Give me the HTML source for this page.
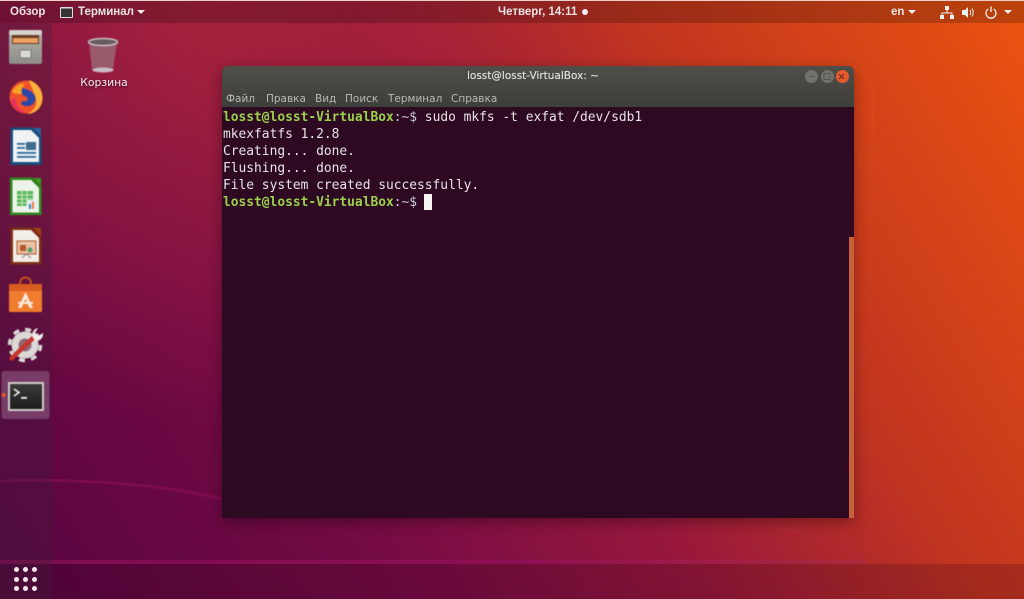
<!DOCTYPE html>
<html><head><meta charset="utf-8"><style>
html,body{margin:0;padding:0;width:1024px;height:599px;overflow:hidden;background:#800c3e}
*{box-sizing:border-box}
.abs{position:absolute}
#bg{position:absolute;left:0;top:0;width:1024px;height:599px}
.panel{position:absolute;left:0;top:0;width:1024px;height:23px;background:rgba(0,0,0,.2);border-top:1px solid #e9d0c8;font:11.5px "Liberation Sans","DejaVu Sans",sans-serif;color:#e8e4e2;font-weight:bold}
.panel span{position:absolute;top:5px;white-space:nowrap}
.dock{position:absolute;left:0;top:23px;width:52px;height:576px;background:rgba(60,30,60,.3)}
.bottom{position:absolute;left:0;top:564px;width:1024px;height:35px;background:rgba(40,0,20,.2)}
.win{position:absolute;left:222px;top:66px;width:632px;height:452px;box-shadow:0 4px 14px rgba(0,0,0,.35);border-radius:6px 6px 0 0;overflow:hidden;background:#2d0922}
.title{position:absolute;left:0;top:0;width:632px;height:41px;background:linear-gradient(#4f4e48,#3e3e3a);text-align:center;font:10.500px "DejaVu Sans","Liberation Sans",sans-serif;color:#dedcd6;padding-top:4px;padding-right:10px;text-shadow:0 0 .5px #dedcd6}
.menu{position:absolute;top:27px;font:10.500px "DejaVu Sans","Liberation Sans",sans-serif;color:#b9b7b0;white-space:nowrap}
pre{position:absolute;left:1px;top:43px;margin:0;font:12.9px/17px "DejaVu Sans Mono","Liberation Mono",monospace;color:#e8e4e4}
pre b{color:#9ad14a;font-weight:bold}
pre i{font-style:normal;color:#c8c8d8}
.cur{position:absolute;left:202px;top:128px;width:8px;height:16px;background:#f6f4f4}
.scroll{position:absolute;left:627px;top:171px;width:5px;height:281px;background:#c8603c}
.btn{position:absolute;top:4px;width:13px;height:13px;border-radius:50%;background:#6e6e68}
.lbl{position:absolute;left:72px;top:76px;width:64px;text-align:center;font:10.800px "DejaVu Sans","Liberation Sans",sans-serif;color:#f2eef0;text-shadow:0 1px 2px rgba(0,0,0,.6)}
.dot{position:absolute;width:5px;height:5px;border-radius:50%;background:#f4e6ee}
.soft{filter:blur(.4px)}
</style></head><body>
<svg id="bg" viewBox="0 0 1024 599">
<defs>
<linearGradient id="g" gradientUnits="userSpaceOnUse" x1="70" y1="640" x2="1040" y2="50">
<stop offset="0" stop-color="#5a0540"/>
<stop offset=".28" stop-color="#760b45"/>
<stop offset=".5" stop-color="#98183c"/>
<stop offset=".7" stop-color="#c03420"/>
<stop offset="1" stop-color="#ea5310"/>
</linearGradient>
<radialGradient id="t" gradientUnits="userSpaceOnUse" cx="200" cy="0" r="420">
<stop offset="0" stop-color="#b0283a" stop-opacity=".75"/>
<stop offset="1" stop-color="#b0283a" stop-opacity="0"/>
</radialGradient>
<linearGradient id="ln" gradientUnits="userSpaceOnUse" x1="0" y1="0" x2="866" y2="0">
<stop offset="0" stop-color="#7c0c50"/>
<stop offset=".6" stop-color="#8f0f55"/>
<stop offset="1" stop-color="#ac2a3c"/>
</linearGradient>
</defs>
<rect width="1024" height="599" fill="url(#g)"/>
<rect width="1024" height="599" fill="url(#t)"/>
<path d="M0 481C90 478 170 486 222 499" stroke="#8a0f55" stroke-opacity=".6" stroke-width="3" fill="none"/>
<path d="M780 527C815 535 845 548 866 561" stroke="#b02c3e" stroke-opacity=".55" stroke-width="3" fill="none"/>
<path d="M0 562H866" stroke="url(#ln)" stroke-width="4" fill="none"/>
<path d="M854 66Q872 78 873 95V140" stroke="#f07030" stroke-opacity=".1" stroke-width="3" fill="none"/>
</svg>
<div class="bottom"></div>
<div class="dock"></div>
<div class="panel">
<span style="left:10px">Обзор</span>
<svg class="abs" style="left:60px;top:6px" width="13" height="11"><rect width="13" height="11" rx="1" fill="#ddd"/><rect x="1" y="1.500" width="11" height="8.500" fill="#333"/></svg>
<span style="left:78px">Терминал</span>
<svg class="abs" style="left:137px;top:9px" width="8" height="5"><path d="M0 0H8L4 4Z" fill="#eee"/></svg>
<span style="left:498px">Четверг, 14:11</span>
<div class="abs" style="left:582px;top:8px;width:6px;height:6px;border-radius:50%;background:#eee"></div>
<span style="left:891px">en</span>
<svg class="abs" style="left:908px;top:9px" width="8" height="5"><path d="M0 0H8L4 4Z" fill="#eee"/></svg>
<svg class="abs" style="left:940px;top:5px" width="14" height="13"><path d="M5 0H9V4H5ZM0 9H4V13H0ZM10 9H14V13H10ZM6.500 4H7.500V6.500H12.500V9H11.500V7.500H2.500V9H1.500V6.500H6.500Z" fill="#eee"/></svg>
<svg class="abs" style="left:962px;top:5px" width="13" height="13"><path d="M0 4H3L6 1V12L3 9H0Z" fill="#eee"/><path d="M8 4Q9.500 6.500 8 9M10 2.500Q12.500 6.500 10 10.500" stroke="#eee" fill="none"/></svg>
<svg class="abs" style="left:985px;top:5px" width="12" height="13"><path d="M3.300 3A5 5 0 1 0 8.700 3M6 0.500V6" stroke="#eee" stroke-width="1.300" fill="none"/></svg>
<svg class="abs" style="left:1004px;top:9px" width="8" height="5"><path d="M0 0H8L4 4Z" fill="#eee"/></svg>
</div>

<!-- dock icons -->
<svg class="abs soft" style="left:0;top:23px" width="52" height="400" viewBox="0 23 52 400">
<defs><linearGradient id="gr" x1="0" y1="0" x2="0" y2="1"><stop offset="0" stop-color="#b5b3ae"/><stop offset="1" stop-color="#8f8d88"/></linearGradient>
<linearGradient id="tm" x1="0" y1="0" x2="0" y2="1"><stop offset="0" stop-color="#3a3b38"/><stop offset="1" stop-color="#1c1d1b"/></linearGradient></defs>
<!-- files -->
<rect x="9" y="30" width="33" height="34" rx="2" fill="url(#gr)"/>
<rect x="9" y="30" width="33" height="5" rx="2" fill="#d5d3cf"/>
<rect x="12" y="35" width="27" height="9" fill="#6b3a22"/>
<rect x="13" y="38" width="25" height="5" fill="#eda264"/>
<rect x="20" y="50" width="11" height="8" rx="1" fill="#dcdad6" stroke="#77756f"/>
<!-- firefox -->
<circle cx="26" cy="97" r="16.500" fill="#f0502a"/>
<path d="M29 80C38 83 43 91 42.500 99C42 108 35 114 27 114C36 110 38 102 35 96C33 90 31 86 29 81Z" fill="#fbb03a"/>
<path d="M20 87C25 89 32 90 35 96C37 103 31 107 25 106C21 105 20 103 23 101C26 102 29 100 27 97C23 96 20 93 20 87Z" fill="#2c46a8"/>
<path d="M12 92C15 86 20 83 25 84C22 87 21 91 22 94C18 94 15 94 12 92Z" fill="#f9a325"/>
<path d="M11 100C13 108 20 113 27 113C19 110 15 105 15 98Z" fill="#e8286a"/>
<!-- writer -->
<path d="M10.500 127.500H32L41.500 137V165H10.500Z" fill="#174f7e"/>
<path d="M13 130H31L39 138V162H13Z" fill="#f0f2f4"/>
<path d="M33 128H41V136Z" fill="#2468a3"/>
<rect x="17" y="143" width="8" height="1.800" fill="#2a6a9a"/><rect x="17" y="147" width="8" height="1.800" fill="#2a6a9a"/>
<rect x="26" y="142" width="10" height="8" fill="#3f6d8c"/>
<rect x="17" y="152" width="19" height="1.800" fill="#2a6a9a"/><rect x="17" y="156" width="19" height="1.800" fill="#2a6a9a"/>
<!-- calc -->
<path d="M10 177.500H32L41.500 187V215H10Z" fill="#2e8b1e"/>
<path d="M12.500 180H31L39 188V212.500H12.500Z" fill="#eef3ea"/>
<path d="M33 178H41V186Z" fill="#3b9e1e"/>
<rect x="17" y="191" width="16" height="15" fill="#5cb85c"/>
<path d="M17 195H33M17 199H33M17 203H33M22 191V206M27 191V206" stroke="#e6f5e0" stroke-width=".8"/>
<rect x="27" y="200" width="11" height="9" fill="#e8eef2"/><rect x="29" y="204" width="2" height="5" fill="#3a7fc0"/><rect x="32" y="202" width="2" height="7" fill="#e88030"/>
<!-- impress -->
<path d="M10.500 227.500H32L41.500 237V264.500H10.500Z" fill="#7c2f12"/>
<path d="M13 230H31L39 238V262H13Z" fill="#f3ede8"/>
<path d="M33 228H41V236Z" fill="#a04216"/>
<rect x="17" y="241" width="19" height="13" fill="#e9c2a8" stroke="#b05828"/>
<rect x="20" y="245" width="6" height="6" fill="#b05828"/><circle cx="30" cy="250" r="2.500" fill="#50a060"/>
<path d="M26 254L22 258M26 254L31 258" stroke="#888"/>
<!-- software -->
<path d="M20 285V283A5.500 5.500 0 0 1 31 283V285" stroke="#c44d1a" stroke-width="2" fill="none"/>
<rect x="9" y="284" width="33" height="28" rx="1" fill="#f07c30"/>
<path d="M9 285Q9 284 10 284H41Q42 284 42 285V291H9Z" fill="#d95c20"/>
<path d="M25.500 292L33 308H29.500L25.500 299L21.500 308H18Z" fill="#fbe8dc"/>
<rect x="18" y="302" width="15" height="2" fill="#fbe8dc"/>
<!-- settings -->
<circle cx="25" cy="345" r="13.500" fill="#dcdad6"/>
<circle cx="25" cy="345" r="15.500" fill="none" stroke="#dcdad6" stroke-width="3.500" stroke-dasharray="6 6.170"/>
<circle cx="25" cy="345" r="6.500" fill="#8c6878"/>
<path d="M11.500 358.500L34 337" stroke="#c8322a" stroke-width="4.500" stroke-linecap="round"/>
<path d="M33 338A7 7 0 0 1 38 328L35 333L38 336L43 333A7 7 0 0 1 36 341Z" fill="#efeeea"/>
<!-- terminal -->
<rect x="1.500" y="371" width="48" height="48" rx="3" fill="#b089a8" fill-opacity=".38"/>
<circle cx="3.500" cy="395" r="2" fill="#e9582a"/>
<rect x="8" y="382" width="36" height="29" rx="1" fill="#cfcfcb"/>
<rect x="10" y="384" width="32" height="25" fill="url(#tm)"/>
<path d="M14 389L19 392.500L14 396" stroke="#f2f2f2" stroke-width="1.600" fill="none"/>
<rect x="21" y="397" width="6" height="1.800" fill="#f2f2f2"/>
</svg>
<div class="dot" style="left:14px;top:567px"></div><div class="dot" style="left:23px;top:567px"></div><div class="dot" style="left:32px;top:567px"></div>
<div class="dot" style="left:14px;top:577px"></div><div class="dot" style="left:23px;top:577px"></div><div class="dot" style="left:32px;top:577px"></div>
<div class="dot" style="left:14px;top:586px"></div><div class="dot" style="left:23px;top:586px"></div><div class="dot" style="left:32px;top:586px"></div>

<!-- trash -->
<svg class="abs soft" style="left:86px;top:37px" width="34" height="38">
<path d="M3 5L6 33Q17 37 27 33L31 5Z" fill="#9a6a78" fill-opacity=".8"/>
<ellipse cx="17" cy="5" rx="14.500" ry="3.500" fill="#6a5a5e" stroke="#c5c0c0" stroke-width="1.500"/>
<ellipse cx="17" cy="33" rx="10.500" ry="2.500" fill="#cdbcc4"/>
</svg>
<div class="lbl">Корзина</div>

<div class="win">
<div class="title">losst@losst-VirtualBox: ~</div>
<span class="btn" style="left:583px;background:#72726c"></span>
<span class="btn" style="left:599px;background:#72726c"></span>
<span class="btn" style="left:614px;background:#e8592e"></span>
<svg class="abs" style="left:583px;top:4px" width="44" height="13"><path d="M3.500 6.500H9.500" stroke="#555" stroke-width="1"/><rect x="19" y="3.500" width="6" height="6" fill="none" stroke="#555"/><path d="M34 4L39 9M39 4L34 9" stroke="#632" stroke-width="1.200"/></svg>
<span class="menu" style="left:4px">Файл</span>
<span class="menu" style="left:44px">Правка</span>
<span class="menu" style="left:93px">Вид</span>
<span class="menu" style="left:123px">Поиск</span>
<span class="menu" style="left:166px">Терминал</span>
<span class="menu" style="left:229px">Справка</span>
<pre><b>losst@losst-VirtualBox</b><i>:~$</i> sudo mkfs -t exfat /dev/sdb1
mkexfatfs 1.2.8
Creating... done.
Flushing... done.
File system created successfully.
<b>losst@losst-VirtualBox</b><i>:~$</i></pre>
<div class="cur"></div>
<div class="scroll"></div>
</div>
</body></html>
